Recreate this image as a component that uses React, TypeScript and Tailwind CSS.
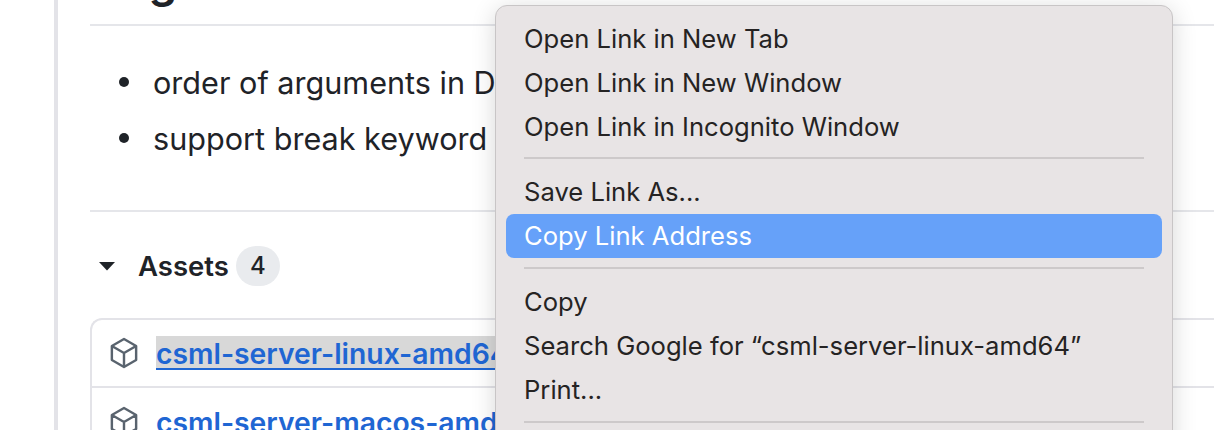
const menuFont = { fontFamily: '"Inter", "Liberation Sans", sans-serif' }

function PackageIcon() {
  return (
    <svg width="28" height="32" viewBox="0 0 30 34" fill="none" className="shrink-0">
      <path
        d="M15 2 28 9.5V24.5L15 32 2 24.5V9.5L15 2ZM2.5 9.8 15 17 27.500 9.800M15 17V31.500"
        stroke="#59636e"
        strokeWidth="2.6"
        strokeLinejoin="round"
      />
    </svg>
  )
}

function MenuItem({ label, active }: { label: string; active?: boolean }) {
  return (
    <div
      className={
        active
          ? "h-[44px] mx-[10px] px-[18px] flex items-center rounded-[8px] bg-[#66a1f9] text-white"
          : "h-[44px] mx-[10px] px-[18px] flex items-center text-[#252323]"
      }
    >
      <span className="relative top-[0.5px]">{label}</span>
    </div>
  )
}

function MenuSep({ className }: { className: string }) {
  return <div className={`${className} mx-[28px] h-[2px] bg-[#cdc9ca]`} />
}

function Bullet({ children }: { children: string }) {
  return (
    <li className="flex items-center h-[56px] whitespace-nowrap">
      <span className="w-[10px] h-[10px] rounded-full bg-[#1f2328] mr-[24px] shrink-0" />
      <span className="pt-[2px]">{children}</span>
    </li>
  )
}

export default function App() {
  return (
    <div
      className="relative w-[1214px] h-[430px] overflow-hidden bg-white"
      style={{ fontFamily: '"Inter", "Liberation Sans", sans-serif' }}
    >
      <div className="ml-[54px] h-full border-l-[4px] border-[#e3e3e8] pl-[32px] text-[#1f2328]">
        <h2 className="h-[26px] border-b-[2px] border-[#e5e6ea] text-[46px] font-semibold leading-[26px]">
          <span className="relative top-[-33px]">Bugfix</span>
        </h2>

        <ul className="mt-[28px] pl-[29px] text-[30.6px]">
          <Bullet>order of arguments in DateTime</Bullet>
          <Bullet>support break keyword in loops</Bullet>
        </ul>

        <div className="mt-[44px] h-[2px] bg-[#e5e6ea]" />

        <div className="mt-[34px] flex items-center h-[40px]">
          <svg width="16" height="10" viewBox="0 0 16 10" className="ml-[9px] mr-[23px]">
            <path d="M0 1h16L8 9.500z" fill="#1f2328" />
          </svg>
          <span className="pt-[2px] text-[27.5px] font-semibold">Assets</span>
          <span className="ml-[7px] w-[44px] h-[40px] rounded-full bg-[#e9ebee] flex items-center justify-center text-[24px] font-medium">
            4
          </span>
        </div>

        <div className="mt-[32px] border-2 border-[#e3e3e8] rounded-tl-[12px] border-r-0 text-[#1f66d3] text-[28.300px] font-semibold">
          <div className="h-[68px] pl-[18px] flex items-center gap-[18px] border-b-2 border-[#e3e3e8]">
            <PackageIcon />
            <a className="bg-[#d8d8d8] underline underline-offset-[5px] leading-[34px] whitespace-nowrap">
              <span className="relative top-[1px]">csml-server-linux-amd64</span>
            </a>
          </div>
          <div className="h-[68px] pl-[18px] flex items-center gap-[18px]">
            <PackageIcon />
            <a className="leading-[34px] whitespace-nowrap">
              <span className="relative top-[1px]">csml-server-macos-amd64</span>
            </a>
          </div>
        </div>
      </div>

      <div
        className="absolute left-[495px] top-[5px] w-[678px] h-[500px] rounded-[12px] border border-[#c8c5c6] bg-[#e8e4e5] pt-[11px] text-[25.6px] shadow-[0_4px_24px_rgba(0,0,0,0.16)]"
        style={menuFont}
      >
        <MenuItem label="Open Link in New Tab" />
        <MenuItem label="Open Link in New Window" />
        <MenuItem label="Open Link in Incognito Window" />
        <MenuSep className="mt-[8px] mb-[11px]" />
        <MenuItem label="Save Link As..." />
        <MenuItem label="Copy Link Address" active />
        <MenuSep className="mt-[9px] mb-[11px]" />
        <MenuItem label="Copy" />
        <MenuItem label="Search Google for “csml-server-linux-amd64”" />
        <MenuItem label="Print..." />
        <MenuSep className="mt-[9px] mb-[11px]" />
      </div>
    </div>
  )
}
